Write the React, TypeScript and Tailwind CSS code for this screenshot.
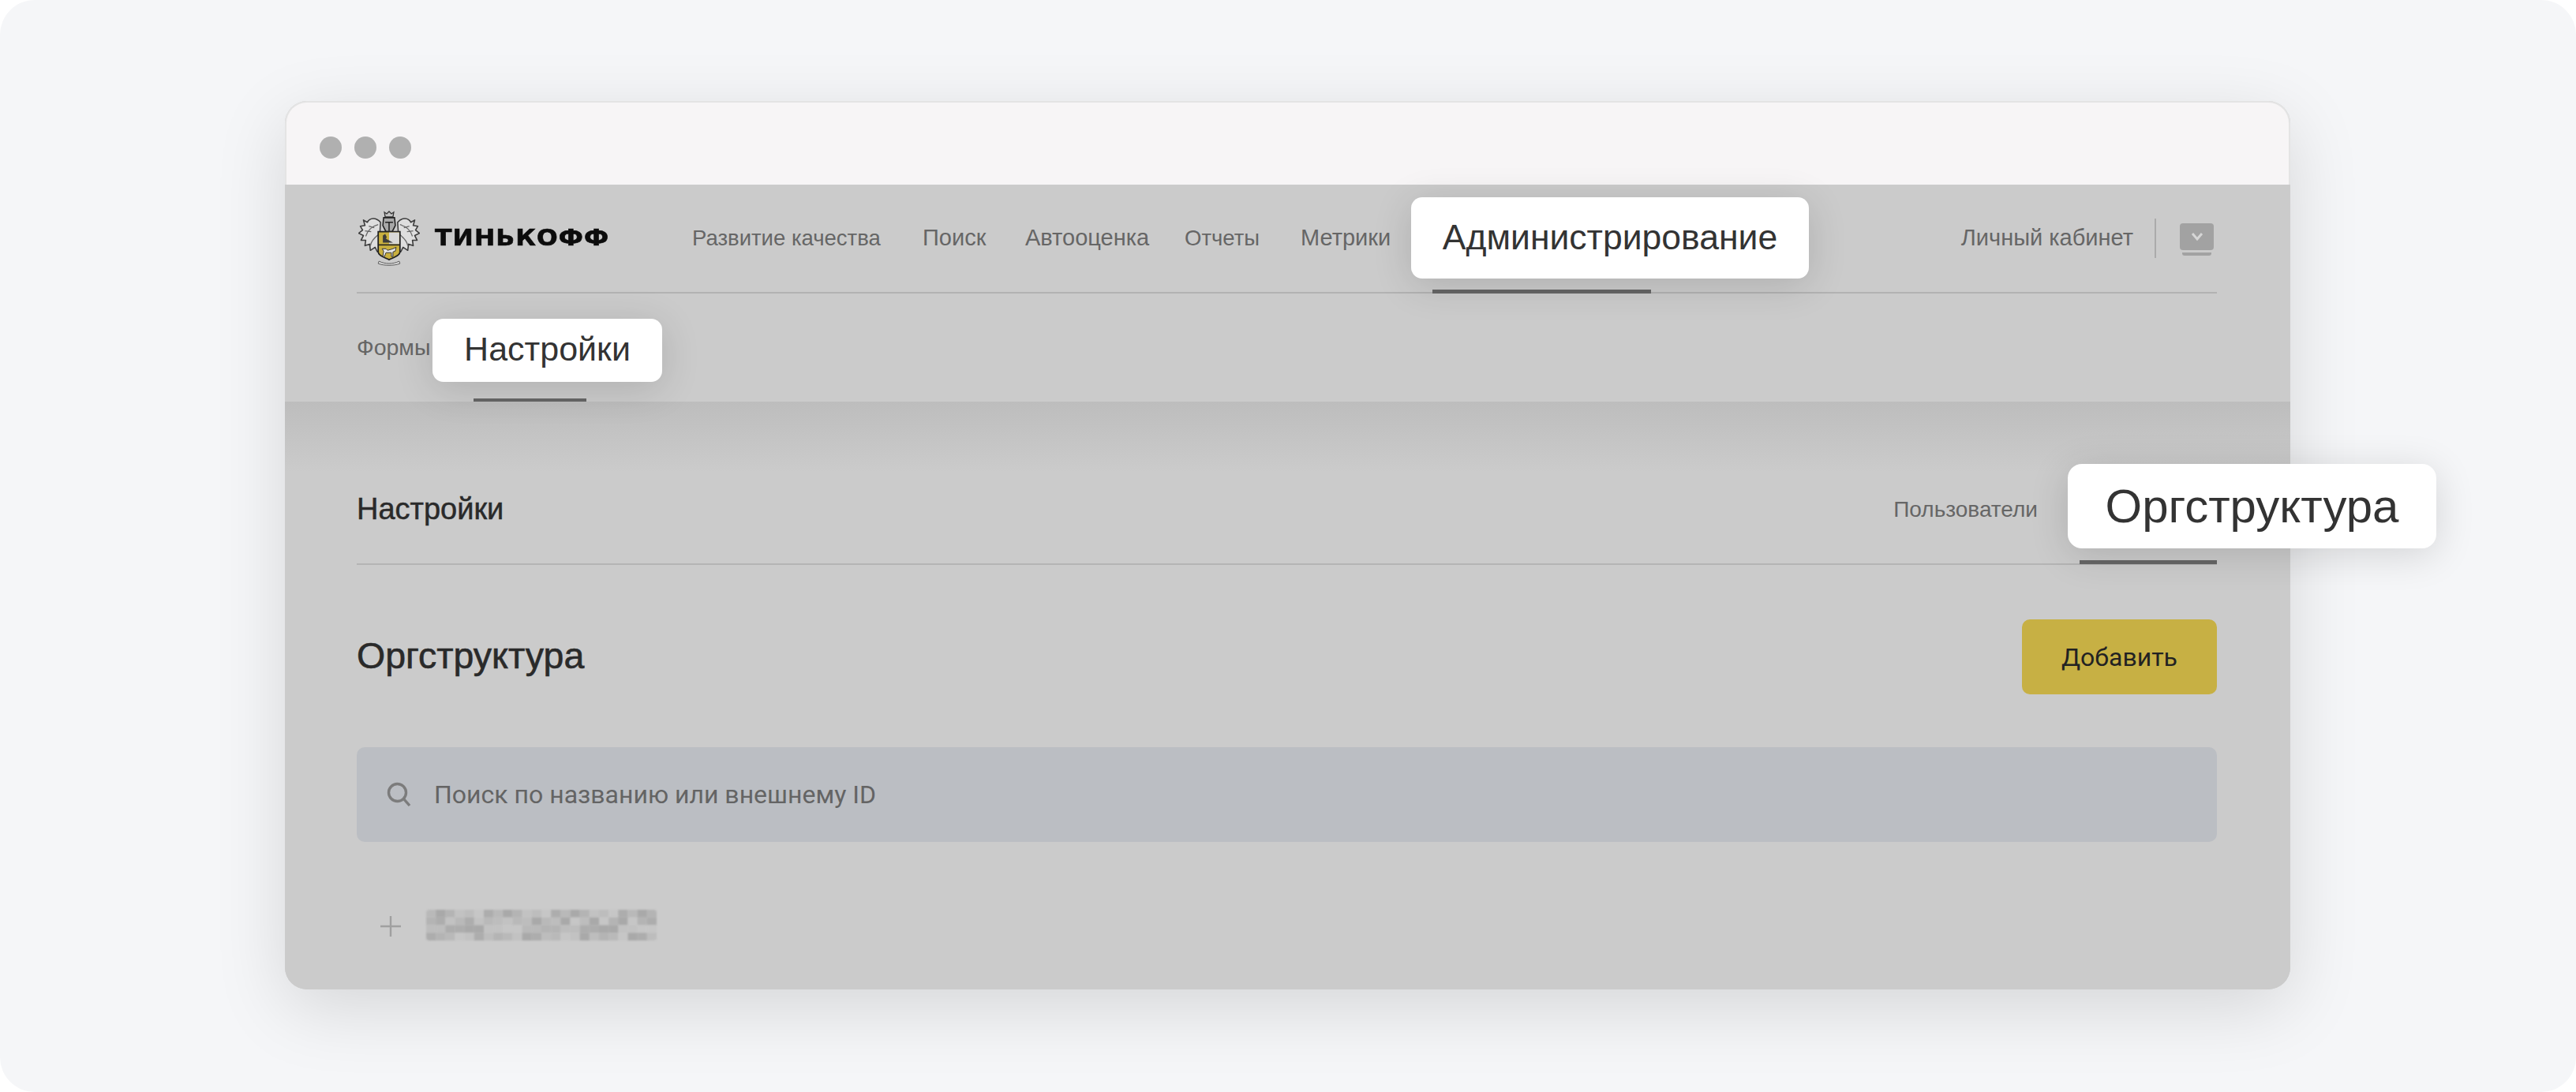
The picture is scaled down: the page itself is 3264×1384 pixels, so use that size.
const sans = "font-['Liberation_Sans',Arial,sans-serif]"

const mainNav = [
  { label: 'Развитие качества', className: 'w-[292px] text-[27.5px]' },
  { label: 'Поиск', className: 'w-[130px] text-[29px]' },
  { label: 'Автооценка', className: 'w-[202px] text-[29px]' },
  { label: 'Отчеты', className: 'w-[147px] text-[27.5px]' },
  { label: 'Метрики', className: 'w-[140px] text-[29px]' },
]

function Leaf() {
  return (
    <g>
      <path
        d="M28 14C22 7 14 8 11 14L6 11 8 18 2 19 5 24 0 28 6 31 3 37 9 37 8 44 14 42 15 50 21 46 24 52 28 50 27 30Z"
        fill="#dedede"
        stroke="#3c3c3c"
        strokeWidth="1.6"
        strokeLinejoin="round"
      />
      <path
        d="M25 17C17 19 11 25 9 32M25 30C20 34 16 38 15 44M20 21L13 19M16 26L8 25"
        fill="none"
        stroke="#666"
        strokeWidth="1.3"
      />
    </g>
  )
}

function TinkoffEmblem() {
  return (
    <svg width="78" height="70" viewBox="0 -1 78 71" className="shrink-0">
      <Leaf />
      <g transform="translate(78,0) scale(-1,1)">
        <Leaf />
      </g>
      {/* crown */}
      <path d="M33 1l3 2 3-3 3 3 3-2-1 6H34z" fill="#c4c4c4" stroke="#333" strokeWidth="1.3" />
      {/* helmet */}
      <path d="M32 8h14l1 10-4 8h-8l-4-8z" fill="#a8a8a8" stroke="#222" strokeWidth="1.6" />
      <path d="M34 14h10M39 14v11" stroke="#222" strokeWidth="1.6" />
      {/* shield */}
      <path d="M25 26h28v26c0 5-8 7-14 10-6-3-14-5-14-10z" fill="#c9b03f" stroke="#222" strokeWidth="1.8" />
      <path d="M39 27h13v15H39z" fill="#d8d8d8" />
      <path d="M25 43h28" stroke="#222" strokeWidth="1.6" />
      <path d="M31 40v-9l3-2 2 4-1 2 9 5z" fill="#3c3c3c" />
      <path d="M30 48h5l2 2 7-2 4-2-1 5-3 1v6h-2v-5h-7l-2 5h-2l1-7z" fill="#e6e6e6" stroke="#333" strokeWidth="1" />
      {/* ribbon */}
      <path d="M26 64c8 4 18 4 26 0l1 3c-8 3-20 3-28 0z" fill="#e0e0e0" stroke="#555" strokeWidth="1" />
    </svg>
  )
}

// blurred-out org name, mosaic from the screenshot
function Mosaic() {
  const shades = ['#b9b9b9', '#c2c2c2', '#adadad', '#b4b4b4', '#c6c6c6', '#a9a9a9', '#bdbdbd']
  const cells = []
  for (let y = 0; y < 4; y++) {
    for (let x = 0; x < 24; x++) {
      cells.push(<rect key={`${x}-${y}`} x={x * 12} y={y * 10} width="12" height="10" fill={shades[(x * 5 + y * 3 + (x * y) % 4) % 7]} />)
    }
  }
  return (
    <svg width="292" height="39" viewBox="0 0 288 40" preserveAspectRatio="none" className="rounded-[4px] block">
      {cells}
    </svg>
  )
}

export default function App() {
  return (
    <div className={`w-[3264px] h-[1384px] bg-white overflow-hidden ${sans}`}>
      <div className="h-full rounded-[44px] bg-[#f5f6f8] pt-[128px] pl-[361px]">
        <div className="relative w-[2541px] h-[1126px] rounded-[28px] bg-[#cbcbcb] shadow-[0_24px_90px_rgba(0,0,0,0.13)]">
          {/* title bar */}
          <div className="h-[106px] rounded-t-[28px] bg-[#f7f5f6] border-t-2 border-x-2 border-[#e4e4e4] flex items-center gap-[16px] pl-[42px] pt-[10px]">
            <span className="w-[28px] h-[28px] rounded-full bg-[#b0b0b0]" />
            <span className="w-[28px] h-[28px] rounded-full bg-[#b0b0b0]" />
            <span className="w-[28px] h-[28px] rounded-full bg-[#b0b0b0]" />
          </div>

          {/* header */}
          <div className="h-[275px] pl-[91px] pr-[93px]">
            <div className="relative h-[138px] flex items-center border-b-2 border-[#b2b2b2]">
              <div className="w-[425px] flex items-center pl-[2px]">
                <TinkoffEmblem />
                <span className="ml-[19px] origin-left scale-x-[1.12] text-[#0c0c0c] text-[28px] leading-none font-bold font-['DejaVu_Sans',sans-serif] tracking-[1px] [-webkit-text-stroke:0.6px_#0c0c0c] whitespace-nowrap">
                  ТИНЬКОФФ
                </span>
              </div>
              {mainNav.map(item => (
                <span key={item.label} className={`text-[#666] whitespace-nowrap ${item.className}`}>
                  {item.label}
                </span>
              ))}
              <div className="relative self-stretch w-[504px] flex items-center">
                <span className="absolute left-[27px] bottom-[-2px] w-[277px] h-[5px] bg-[#666]" />
                <div className="absolute left-0 top-[16px] w-[504px] h-[103px] rounded-[14px] bg-white shadow-[0_8px_50px_rgba(0,0,0,0.14)] flex items-center justify-center text-[44.5px] text-[#333] whitespace-nowrap">
                  Администрирование
                </div>
              </div>
              <div className="ml-auto flex items-center">
                <span className="text-[29px] text-[#666] whitespace-nowrap">Личный кабинет</span>
                <span className="ml-[27px] w-[2px] h-[50px] bg-[#ababab]" />
                <div className="ml-[30px] mr-[4px] mt-[2px] flex flex-col items-center">
                  <div className="w-[43px] h-[34px] rounded-[4px] bg-[#a2a2a2] flex items-center justify-center">
                    <svg width="16" height="12" viewBox="0 0 16 12" fill="none">
                      <path d="M2 2l6 7 6-7" stroke="#d6d6d6" strokeWidth="3" />
                    </svg>
                  </div>
                  <div className="mt-[3px] w-[37px] h-[4px] rounded-b-[3px] bg-[#a2a2a2]" />
                </div>
              </div>
            </div>
            <div className="relative h-[137px] flex items-center">
              <span className="text-[28.5px] text-[#666] whitespace-nowrap">Формы</span>
              <span className="absolute left-[148px] bottom-0 w-[143px] h-[4px] bg-[#666]" />
              <div className="absolute left-[96px] top-[32px] w-[291px] h-[80px] rounded-[14px] bg-white shadow-[0_8px_50px_rgba(0,0,0,0.14)] flex items-center justify-center pb-[3px] text-[43px] text-[#333] whitespace-nowrap">
                Настройки
              </div>
            </div>
          </div>

          {/* page body */}
          <div className="h-[745px] pl-[91px] pr-[93px] rounded-b-[28px] bg-gradient-to-b from-[#bdbdbd] to-[#cbcbcb] to-[12%]">
            <div className="relative h-[207px] flex items-center justify-between border-b-2 border-[#b4b4b4] pt-[68px]">
              <span className="text-[38px] text-[#2a2a2a] [-webkit-text-stroke:0.5px_#2a2a2a] whitespace-nowrap">Настройки</span>
              <div className="flex items-center pr-[227px]">
                <span className="text-[28px] text-[#666] whitespace-nowrap">Пользователи</span>
              </div>
              <span className="absolute right-0 bottom-[-1px] w-[174px] h-[5px] bg-[#666]" />
              <div className="absolute left-[2168px] top-[79px] w-[467px] h-[107px] rounded-[18px] bg-white shadow-[0_8px_50px_rgba(0,0,0,0.14)] flex items-center justify-center text-[60px] text-[#333] whitespace-nowrap">
                Оргструктура
              </div>
            </div>
            <div className="h-[231px] flex items-center justify-between">
              <span className="text-[46.5px] text-[#2a2a2a] [-webkit-text-stroke:0.6px_#2a2a2a] whitespace-nowrap">Оргструктура</span>
              <button className="mt-[2px] w-[247px] h-[95px] rounded-[10px] bg-[#c7b044] text-[32px] text-[#222] font-['Roboto',sans-serif]">
                Добавить
              </button>
            </div>
            <div className="h-[120px] rounded-[10px] bg-[#bbbec3] flex items-center pl-[38px]">
              <svg width="32" height="32" viewBox="0 0 32 32" fill="none" className="shrink-0">
                <circle cx="13.5" cy="13.5" r="11" stroke="#7c7c7c" strokeWidth="3.4" />
                <path d="M21.5 21.5L29 30" stroke="#7c7c7c" strokeWidth="3.4" />
              </svg>
              <span className="ml-[28px] text-[32px] text-[#646464] font-['Roboto',sans-serif] whitespace-nowrap">
                Поиск по названию или внешнему ID
              </span>
            </div>
            <div className="mt-[86px] flex items-center pl-[30px]">
              <svg width="26" height="26" viewBox="0 0 26 26" className="shrink-0 mt-[3px]">
                <path d="M13 0v26M0 13h26" stroke="#a0a0a0" strokeWidth="2.4" />
              </svg>
              <div className="ml-[32px] blur-[1px]">
                <Mosaic />
              </div>
            </div>
          </div>
        </div>
      </div>
    </div>
  )
}
